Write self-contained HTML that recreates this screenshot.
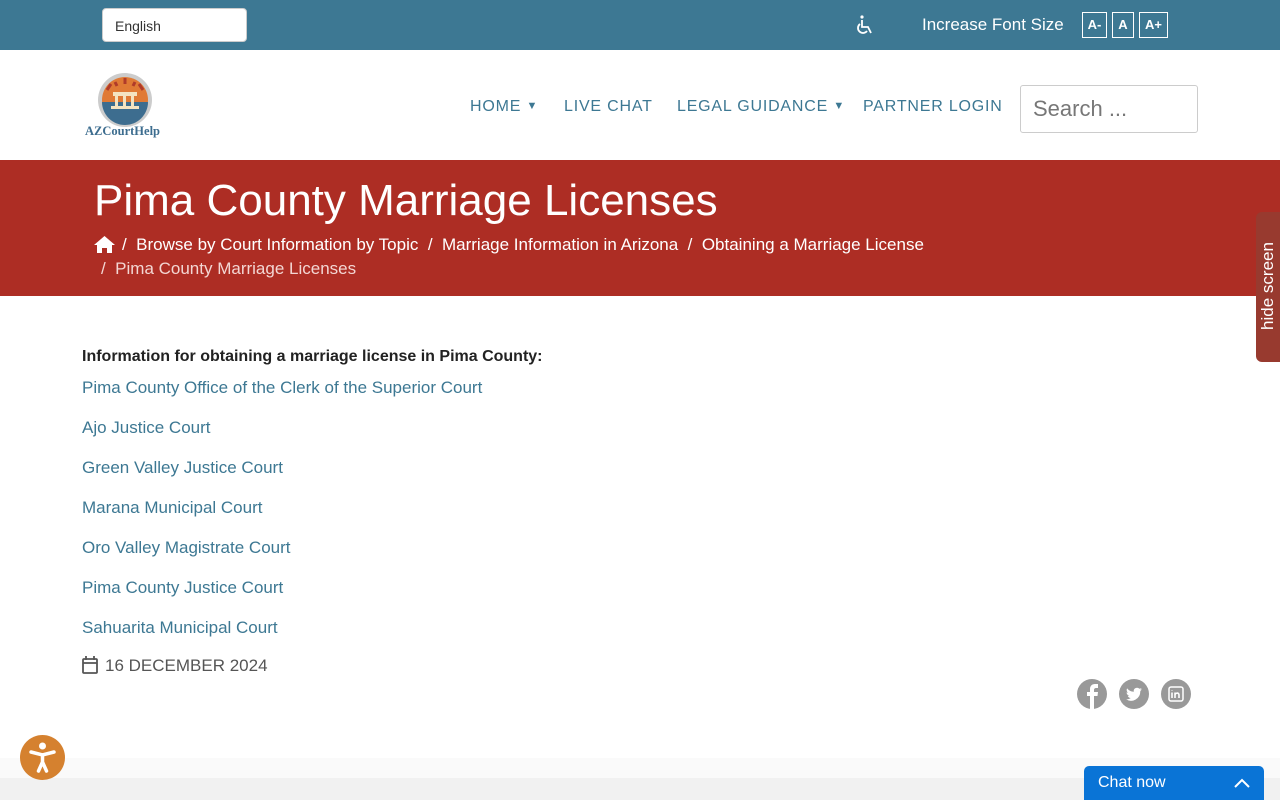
<!DOCTYPE html>
<html><head><meta charset="utf-8"><style>
*{margin:0;padding:0;box-sizing:border-box}
body{width:1280px;height:800px;overflow:hidden;font-family:"Liberation Sans",sans-serif;background:#fff;position:relative}
.top{height:50px;background:#3d7893;position:relative}
.lang{position:absolute;left:102px;top:8px;width:145px;height:34px;background:#fff;border:1px solid #ccc;border-radius:4px;font-size:14px;padding:9px 12px;color:#333}
.top .ifs{position:absolute;left:922px;top:15px;color:#fff;font-size:17px}
.fb{position:absolute;top:12px;height:26px;border:1px solid #fff;color:#fff;font-weight:bold;font-size:13px;text-align:center;line-height:24px}
.hdr{height:110px;position:relative}
.nav{position:absolute;top:48px;font-size:16px;letter-spacing:0.8px;color:#3d7893}
.nav small{font-size:11px;vertical-align:2px}
.search{position:absolute;left:1020px;top:35px;width:178px;height:48px;border:1px solid #ccc;border-radius:3px;font-size:22px;color:#777;padding:10px 12px}
.banner{height:136px;background:#ad2d24;position:relative;color:#fff}
.a{color:#3d7893;font-size:17px;position:absolute;left:82px}
.hide{position:absolute;left:1256px;top:212px;width:24px;height:150px;background:#983a2f;border-radius:6px 0 0 6px}
.hide span{position:absolute;left:-43px;top:64px;transform:rotate(-90deg);color:#fff;font-size:17px;width:110px;text-align:center}
.soc{position:absolute;top:679px;width:30px;height:30px}
</style></head><body>
<div class="top">
<div class="lang">English</div>
<svg style="position:absolute;left:855px;top:14px" width="20" height="22" viewBox="0 0 20 22" fill="none" stroke="#fff" stroke-width="1.8"><circle cx="7" cy="3" r="1.6" fill="#fff" stroke="none"/><path d="M7 6v7h6l3 6"/><path d="M5 10a5 5 0 1 0 7 7"/></svg>
<div class="ifs">Increase Font Size</div>
<div class="fb" style="left:1082px;width:25px">A-</div>
<div class="fb" style="left:1112px;width:22px">A</div>
<div class="fb" style="left:1139px;width:29px">A+</div>
</div>
<div class="hdr">
<svg style="position:absolute;left:97px;top:22px" width="56" height="56" viewBox="0 0 56 56"><circle cx="28" cy="28" r="27" fill="#ccc"/><circle cx="28" cy="28" r="23" fill="#e07a35"/><path d="M5 30h46a23 23 0 0 1-46 0z" fill="#3d6d8f"/><rect x="16" y="20" width="24" height="4" fill="#f4e3c0"/><rect x="18" y="24" width="3" height="10" fill="#f4e3c0"/><rect x="26" y="24" width="3" height="10" fill="#f4e3c0"/><rect x="34" y="24" width="3" height="10" fill="#f4e3c0"/><rect x="14" y="34" width="28" height="3" fill="#f4e3c0"/><path d="M10 18l4 -6M28 6v6M46 18l-4-6M18 10l2 4M38 10l-2 4" stroke="#b03b2a" stroke-width="3"/></svg>
<div style="position:absolute;left:85px;top:74px;font-family:'Liberation Serif',serif;font-weight:bold;font-size:12.5px;color:#3d6d8f">AZCourtHelp</div>
<div class="nav" style="left:470px">HOME <small>▼</small></div>
<div class="nav" style="left:564px">LIVE CHAT</div>
<div class="nav" style="left:677px">LEGAL GUIDANCE <small>▼</small></div>
<div class="nav" style="left:863px">PARTNER LOGIN</div>
<div class="search">Search ...</div>
</div>
<div class="banner">
<div style="position:absolute;left:94px;top:16px;font-size:44px">Pima County Marriage Licenses</div>
<svg style="position:absolute;left:94px;top:76px" width="21" height="17" viewBox="0 0 21 17"><path d="M10.5 0L0 9h3v8h5v-5h5v5h5V9h3z" fill="#fff"/></svg>
<div style="position:absolute;left:122px;top:75px;font-size:17px">/ &nbsp;Browse by Court Information by Topic &nbsp;/ &nbsp;Marriage Information in Arizona &nbsp;/ &nbsp;Obtaining a Marriage License</div>
<div style="position:absolute;left:101px;top:99px;font-size:17px;color:#f3d6d3">/ &nbsp;Pima County Marriage Licenses</div>
</div>
<div class="hide"><span>hide screen</span></div>
<div style="position:absolute;left:82px;top:348px;font-size:16px;font-weight:bold;color:#222">Information for obtaining a marriage license in Pima County:</div>
<div class="a" style="top:378px">Pima County Office of the Clerk of the Superior Court</div>
<div class="a" style="top:418px">Ajo Justice Court</div>
<div class="a" style="top:458px">Green Valley Justice Court</div>
<div class="a" style="top:498px">Marana Municipal Court</div>
<div class="a" style="top:538px">Oro Valley Magistrate Court</div>
<div class="a" style="top:578px">Pima County Justice Court</div>
<div class="a" style="top:618px">Sahuarita Municipal Court</div>
<svg style="position:absolute;left:82px;top:656px" width="16" height="18" viewBox="0 0 16 18" fill="none" stroke="#555" stroke-width="1.8"><rect x="1" y="3" width="14" height="14" rx="1"/><path d="M1 7h14M4 0v4M12 0v4"/></svg>
<div style="position:absolute;left:105px;top:656px;font-size:17px;color:#555">16 DECEMBER 2024</div>
<svg class="soc" style="left:1077px" viewBox="0 0 30 30"><circle cx="15" cy="15" r="15" fill="#999"/><path d="M13 30V17h-3v-4h3v-3c0-3 2-5 5-5h3v4h-2c-1 0-2 .5-2 2v2h4l-.5 4H17v13z" fill="#fff"/></svg>
<svg class="soc" style="left:1119px" viewBox="0 0 30 30"><circle cx="15" cy="15" r="15" fill="#999"/><path d="M23 10.3c-.6.3-1.2.4-1.9.5.7-.4 1.2-1 1.4-1.8-.6.4-1.3.6-2.1.8a3.3 3.3 0 0 0-5.6 3A9.3 9.3 0 0 1 8.1 9.4a3.3 3.3 0 0 0 1 4.4c-.5 0-1-.2-1.5-.4 0 1.6 1.1 2.9 2.6 3.2-.5.1-1 .2-1.5.1.4 1.3 1.6 2.3 3.1 2.3A6.6 6.6 0 0 1 7 20.3 9.3 9.3 0 0 0 21.3 12.4v-.4c.7-.5 1.2-1 1.7-1.7z" fill="#fff"/></svg>
<svg class="soc" style="left:1161px" viewBox="0 0 30 30"><circle cx="15" cy="15" r="15" fill="#999"/><rect x="8" y="8" width="14" height="14" rx="2" fill="none" stroke="#fff" stroke-width="1.5"/><path d="M11 13.5v5.5M11 11v.5M14 19v-5.5M14 16c0-2 4-3 4 0v3" stroke="#fff" stroke-width="1.6" fill="none"/></svg>
<div style="position:absolute;left:0;top:758px;width:1280px;height:20px;background:#fafafa"></div>
<div style="position:absolute;left:0;top:778px;width:1280px;height:22px;background:#f1f1f1"></div>
<svg style="position:absolute;left:20px;top:735px" width="45" height="45" viewBox="0 0 45 45"><circle cx="22.5" cy="22.5" r="22.5" fill="#d5812f"/><circle cx="22.5" cy="11" r="3.5" fill="#fff"/><path d="M11 17l11.5 3 11.5-3M22.5 20v7l-4 9M22.5 27l4 9" stroke="#fff" stroke-width="3.5" fill="none" stroke-linecap="round"/></svg>
<div style="position:absolute;left:1084px;top:766px;width:180px;height:34px;background:#0a74d6;border-radius:5px 5px 0 0;color:#fff;font-size:16px;padding:8px 14px">Chat now<svg style="position:absolute;right:14px;top:12px" width="16" height="10" viewBox="0 0 16 10"><path d="M1 9l7-7 7 7" stroke="#fff" stroke-width="2" fill="none"/></svg></div>
</body></html>
